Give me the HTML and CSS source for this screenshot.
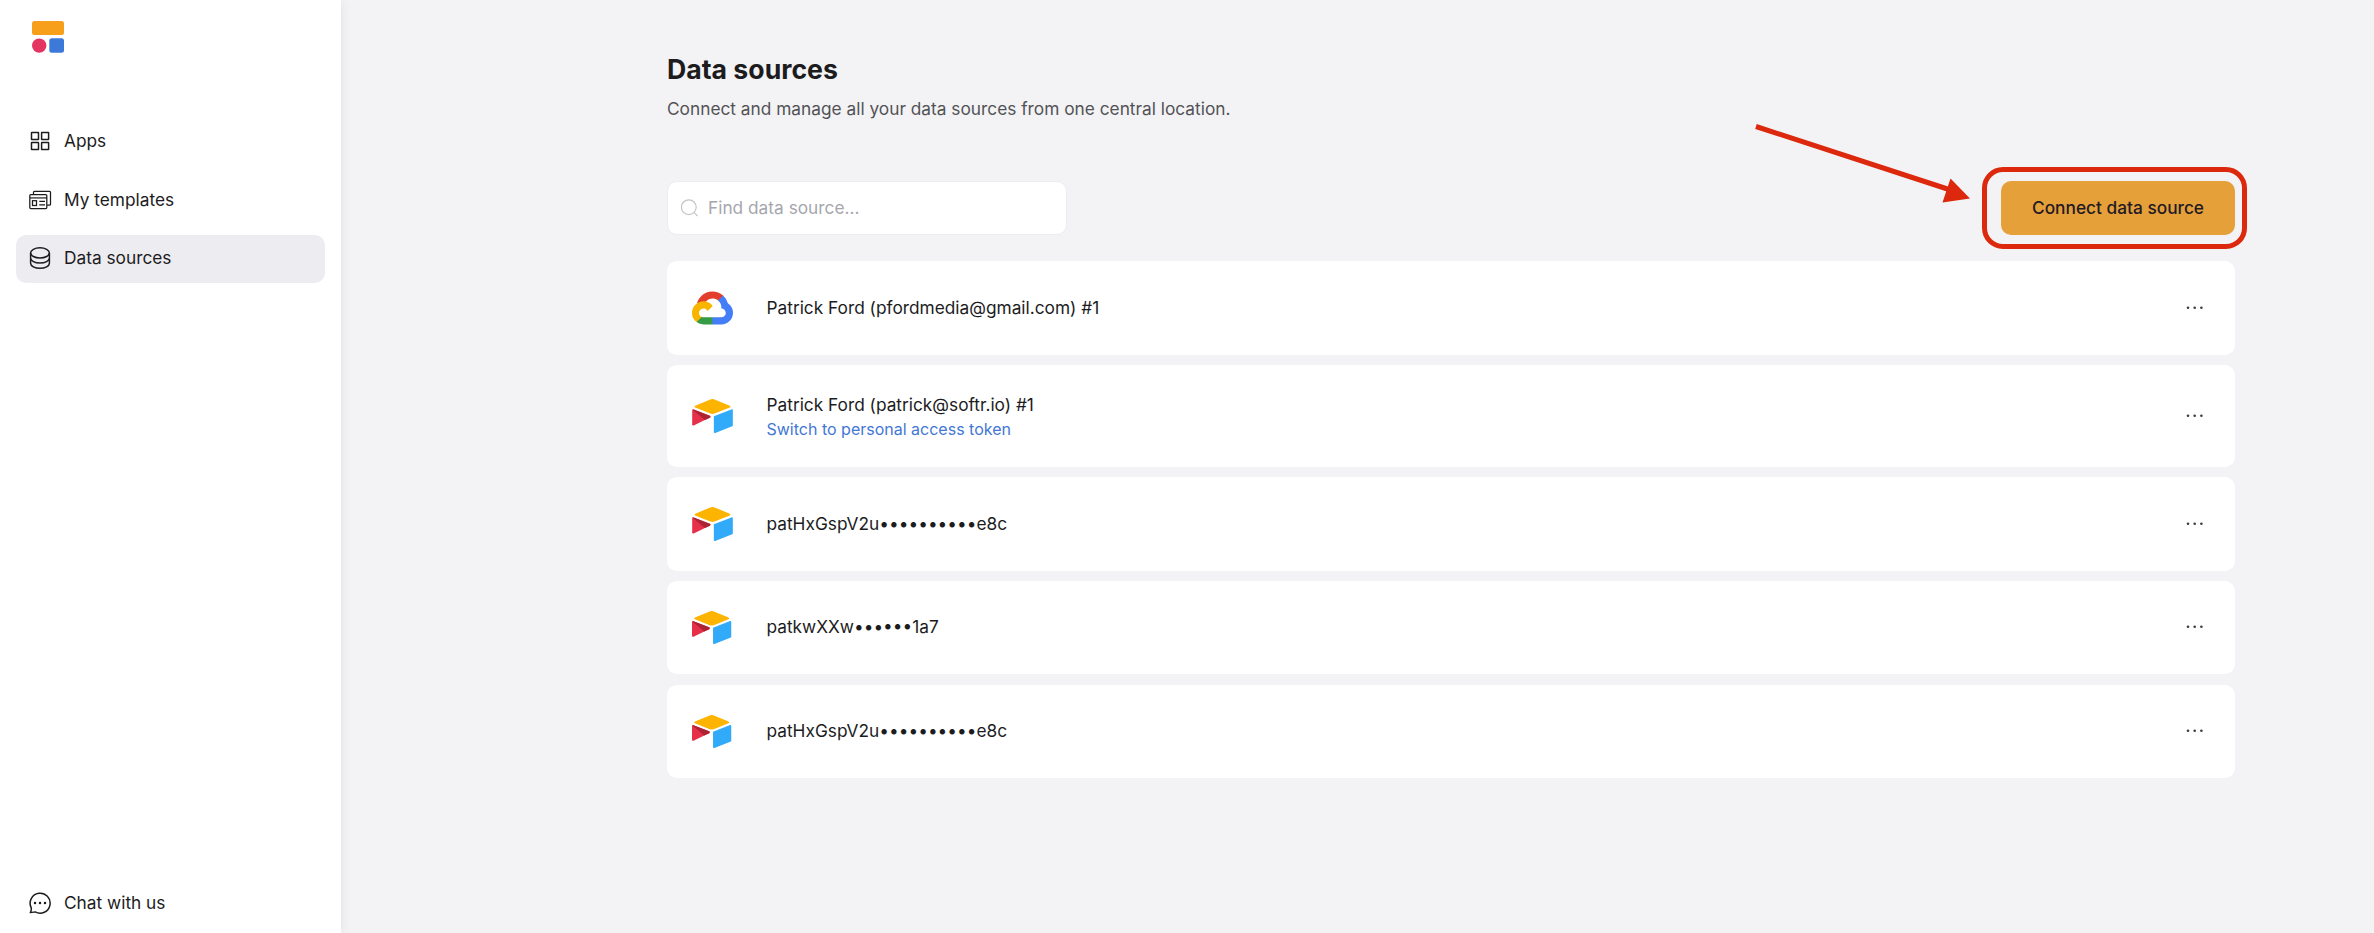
FILE: index.html
```
<!DOCTYPE html>
<html lang="en">
<head>
<meta charset="utf-8">
<title>Data sources</title>
<link rel="stylesheet" href="styles.css">
</head>
<body>
<svg class="sprite" aria-hidden="true">
  <symbol id="airtable" viewBox="11 10.5 177 148">
    <path fill="#FCB400" d="M90.04 12.37 24.08 39.66c-3.67 1.52-3.63 6.73.06 8.19l66.24 26.27a24.6 24.6 0 0 0 18.12 0l66.23-26.27c3.69-1.46 3.73-6.67.06-8.19l-65.96-27.29a24.6 24.6 0 0 0-18.79 0"/>
    <path fill="#31AAF9" d="M105.31 88.46v65.62c0 3.12 3.15 5.26 6.05 4.1l73.81-28.64a4.4 4.4 0 0 0 2.79-4.11V59.81c0-3.12-3.15-5.26-6.05-4.11l-73.81 28.65a4.4 4.4 0 0 0-2.79 4.11"/>
    <path fill="#E6304A" d="m88.08 91.85-21.91 10.57-2.22 1.08-46.24 22.15c-2.93 1.42-6.67-.72-6.67-3.98V60.09c0-1.18.6-2.2 1.41-2.96.34-.34.72-.62 1.12-.84 1.1-.66 2.68-.84 4.02-.31l70.12 27.78c3.56 1.42 3.84 6.41.37 8.09"/>
    <path fill="#AC2434" d="m88.08 91.85-21.91 10.57-53.72-45.29c.34-.34.72-.62 1.12-.84 1.1-.66 2.68-.84 4.02-.31l70.12 27.78c3.56 1.42 3.84 6.41.37 8.09"/>
  </symbol>
  <symbol id="gcloud" viewBox="0 0 256 206">
    <path fill="#E33E2B" d="M170.252 56.819l22.253-22.253 1.483-9.37C153.437-11.677 88.976-7.496 52.42 33.92 42.267 45.423 34.734 59.764 30.717 74.573l7.97-1.123 44.505-7.34 3.436-3.513c19.797-21.742 53.27-24.667 76.128-6.168l7.496.39z"/>
    <path fill="#437DF8" d="M224.205 73.918a100.249 100.249 0 0 0-30.217-48.722l-31.232 31.232a55.515 55.515 0 0 1 20.379 44.037v5.544c15.35 0 27.797 12.445 27.797 27.796 0 15.352-12.446 27.485-27.797 27.485h-55.671l-5.466 5.934v33.34l5.466 5.231h55.67c39.93.311 72.553-31.494 72.864-71.424a72.303 72.303 0 0 0-31.793-60.453"/>
    <path fill="#359C45" d="M71.87 205.796h55.593V161.29H71.87a27.275 27.275 0 0 1-11.477-2.498l-7.887 2.42-22.409 22.253-1.952 7.574a71.968 71.968 0 0 0 43.725 14.757"/>
    <path fill="#F8B500" d="M71.87 61.425C31.943 61.664-.237 94.228.001 134.157a72.303 72.303 0 0 0 28.144 56.881l32.248-32.246c-13.99-6.322-20.208-22.786-13.887-36.776 6.32-13.99 22.786-20.208 36.775-13.888a27.796 27.796 0 0 1 13.887 13.888l32.248-32.248A72.224 72.224 0 0 0 71.87 61.425z"/>
  </symbol>
  <symbol id="more" viewBox="0 0 18 4">
    <g fill="#3d3d40"><circle cx="2" cy="1.7" r="1.3"/><circle cx="8.7" cy="1.7" r="1.3"/><circle cx="15.4" cy="1.7" r="1.3"/></g>
  </symbol>
</svg>

<aside class="sidebar">
  <svg class="logo" viewBox="0 0 32 32">
    <rect width="32" height="14" rx="2.5" fill="#F79F1A"/>
    <circle cx="7.2" cy="24.6" r="7.2" fill="#E43562"/>
    <rect x="17.3" y="17.3" width="14.7" height="14.4" rx="2.5" fill="#3C79D8"/>
  </svg>
  <nav class="nav">
    <a class="nav-item">
      <svg class="icon" viewBox="0 0 24 24"><g fill="none" stroke="#1c1c1e" stroke-width="1.5"><rect x="3.5" y="3.5" width="7" height="7" rx=".3"/><rect x="13.6" y="3.5" width="7" height="7" rx=".3"/><rect x="3.5" y="13.6" width="7" height="7" rx=".3"/><rect x="13.6" y="13.6" width="7" height="7" rx=".3"/></g></svg>
      <span>Apps</span>
    </a>
    <a class="nav-item">
      <svg class="icon" viewBox="0 0 24 24"><g fill="none" stroke="#1c1c1e" stroke-width="1.25"><rect x="1.8" y="6.6" width="17" height="14" rx="1"/><path d="M5.500 6.400V4.300a1 1 0 0 1 1-1h15a1 1 0 0 1 1 1v11.900a1 1 0 0 1-1 1h-2.400"/><rect x="4.500" y="12.700" width="4" height="4.800"/><path d="M11.300 13.400H17M11.300 16.900H17"/></g><path stroke="#1c1c1e" stroke-opacity=".75" stroke-width="1.600" d="M2 9.900h17"/></svg>
      <span>My templates</span>
    </a>
    <a class="nav-item active">
      <svg class="icon" viewBox="0 0 24 24"><g fill="none" stroke="#1c1c1e" stroke-width="1.500"><ellipse cx="12" cy="6.900" rx="9.400" ry="5.100"/><path d="M2.600 6.900v10.300c0 2.800 4.200 5.100 9.400 5.100s9.400-2.300 9.400-5.100V6.900M2.600 12c0 2.800 4.200 5.100 9.400 5.100s9.400-2.300 9.400-5.100"/></g></svg>
      <span>Data sources</span>
    </a>
  </nav>
  <a class="nav-item chat">
    <svg class="icon" viewBox="0 0 24 24"><path fill="none" stroke="#1c1c1e" stroke-width="1.500" stroke-linejoin="round" d="M3.200 16.700A10 10 0 1 1 7.200 20.900c-1.400.2-3 .6-4.900.7.9-1.500 1.200-3.300.9-4.900z"/><g fill="#1c1c1e"><circle cx="7" cy="12.100" r="1.250"/><circle cx="12" cy="12.100" r="1.250"/><circle cx="17" cy="12.100" r="1.250"/></g></svg>
    <span>Chat with us</span>
  </a>
</aside>

<main class="main">
  <h1 class="title">Data sources</h1>
  <p class="subtitle">Connect and manage all your data sources from one central location.</p>
  <div class="toolbar">
    <label class="search">
      <svg class="search-icon" viewBox="0 0 18 18"><g fill="none" stroke="#c4c4c8" stroke-width="1.200"><circle cx="7.800" cy="8.200" r="7.400"/><path d="m12.900 13.400 3.800 3.800"/></g></svg>
      <span>Find data source...</span>
    </label>
    <div class="cta">
      <button class="connect">Connect data source</button>
      <span class="highlight"></span>
      <svg class="arrow" viewBox="0 0 216 82"><path d="M1 2.500 194 65.500" stroke="#DC280D" stroke-width="5"/><path fill="#DC280D" d="m195.500 54.500 19.500 20-27.500 4z"/></svg>
    </div>
  </div>
  <ul class="list">
    <li class="card">
      <svg class="source-logo"><use href="#gcloud"/></svg>
      <div class="source">Patrick Ford (pfordmedia@gmail.com) #1</div>
      <svg class="more"><use href="#more"/></svg>
    </li>
    <li class="card tall">
      <svg class="source-logo"><use href="#airtable"/></svg>
      <div class="source">Patrick Ford (patrick@softr.io) #1<a class="switch">Switch to personal access token</a></div>
      <svg class="more"><use href="#more"/></svg>
    </li>
    <li class="card">
      <svg class="source-logo"><use href="#airtable"/></svg>
      <div class="source">patHxGspV2u••••••••••e8c</div>
      <svg class="more"><use href="#more"/></svg>
    </li>
    <li class="card compact">
      <svg class="source-logo"><use href="#airtable"/></svg>
      <div class="source">patkwXXw••••••1a7</div>
      <svg class="more"><use href="#more"/></svg>
    </li>
    <li class="card compact">
      <svg class="source-logo"><use href="#airtable"/></svg>
      <div class="source">patHxGspV2u••••••••••e8c</div>
      <svg class="more"><use href="#more"/></svg>
    </li>
  </ul>
</main>
</body>
</html>
```
FILE: styles.css
```
* { box-sizing: border-box; }
body {
  margin: 0;
  height: 933px;
  display: flex;
  overflow: hidden;
  background: #f3f3f5;
  color: #1c1c1e;
  font: 17.29px/24px Inter, "Liberation Sans", sans-serif;
}
.sprite { position: absolute; width: 0; height: 0; }
.sidebar {
  width: 341px;
  flex: none;
  display: flex;
  flex-direction: column;
  padding: 21px 16px 6px;
  background: #fff;
  box-shadow: 0 0 10px rgba(90, 90, 140, .11);
}
.logo { width: 32px; height: 32px; margin-left: 16px; }
.nav {
  display: flex;
  flex-direction: column;
  gap: 11px;
  margin-top: 64px;
}
.nav-item {
  display: flex;
  align-items: center;
  gap: 12px;
  height: 48px;
  padding-left: 12px;
  padding-bottom: 1px;
  border-radius: 10px;
}
.active { background: #edecf1; padding-bottom: 3px; }
.icon { width: 24px; height: 24px; }
.chat { margin-top: auto; }

.main {
  width: 1568px;
  margin-left: 326px;
  padding-top: 53px;
}
.title {
  margin: 0;
  font-size: 26.650px;
  line-height: 32px;
  font-weight: 700;
}
.subtitle { margin: 12px 0 0; color: #525256; }
.toolbar {
  display: flex;
  justify-content: space-between;
  align-items: center;
  height: 54px;
  margin-top: 60px;
}
.search {
  display: flex;
  align-items: center;
  gap: 9px;
  width: 400px;
  height: 54px;
  padding-left: 13px;
  background: #fff;
  border: 1px solid #ececf0;
  border-radius: 10px;
  color: #a6a6ad;
}
.search-icon { width: 18px; height: 18px; }
.cta { position: relative; }
.connect {
  display: block;
  width: 234px;
  height: 54px;
  padding: 0;
  border: 0;
  border-radius: 10px;
  background: #e6a039;
  color: #231a24;
  font: 500 17.290px/24px Inter, "Liberation Sans", sans-serif;
}
.highlight {
  position: absolute;
  inset: -14px -12px -14px -19px;
  border: 5px solid #dc280d;
  border-radius: 21px;
}
.arrow {
  position: absolute;
  left: -246px;
  top: -57px;
  width: 216px;
  height: 82px;
}
.list {
  display: flex;
  flex-direction: column;
  gap: 10px;
  margin: 26px 0 0;
  padding: 0;
  list-style: none;
}
.card {
  display: flex;
  align-items: center;
  height: 94px;
  padding: 0 31px 0 25px;
  background: #fff;
  border-radius: 10px;
}
.tall { height: 102px; }
.compact { height: 93px; padding-bottom: 1px; }
.compact + .compact { margin-top: 1px; }
.source-logo { width: 41px; height: 34px; margin-right: 33.500px; }
.compact .source-logo { width: 39.500px; height: 33px; margin-right: 35px; }
.source { flex: 1; }
.tall .source { padding-top: 2px; }
.switch {
  display: block;
  color: #4377d6;
  font-size: 16px;
}
.more { width: 18px; height: 4px; }
```
